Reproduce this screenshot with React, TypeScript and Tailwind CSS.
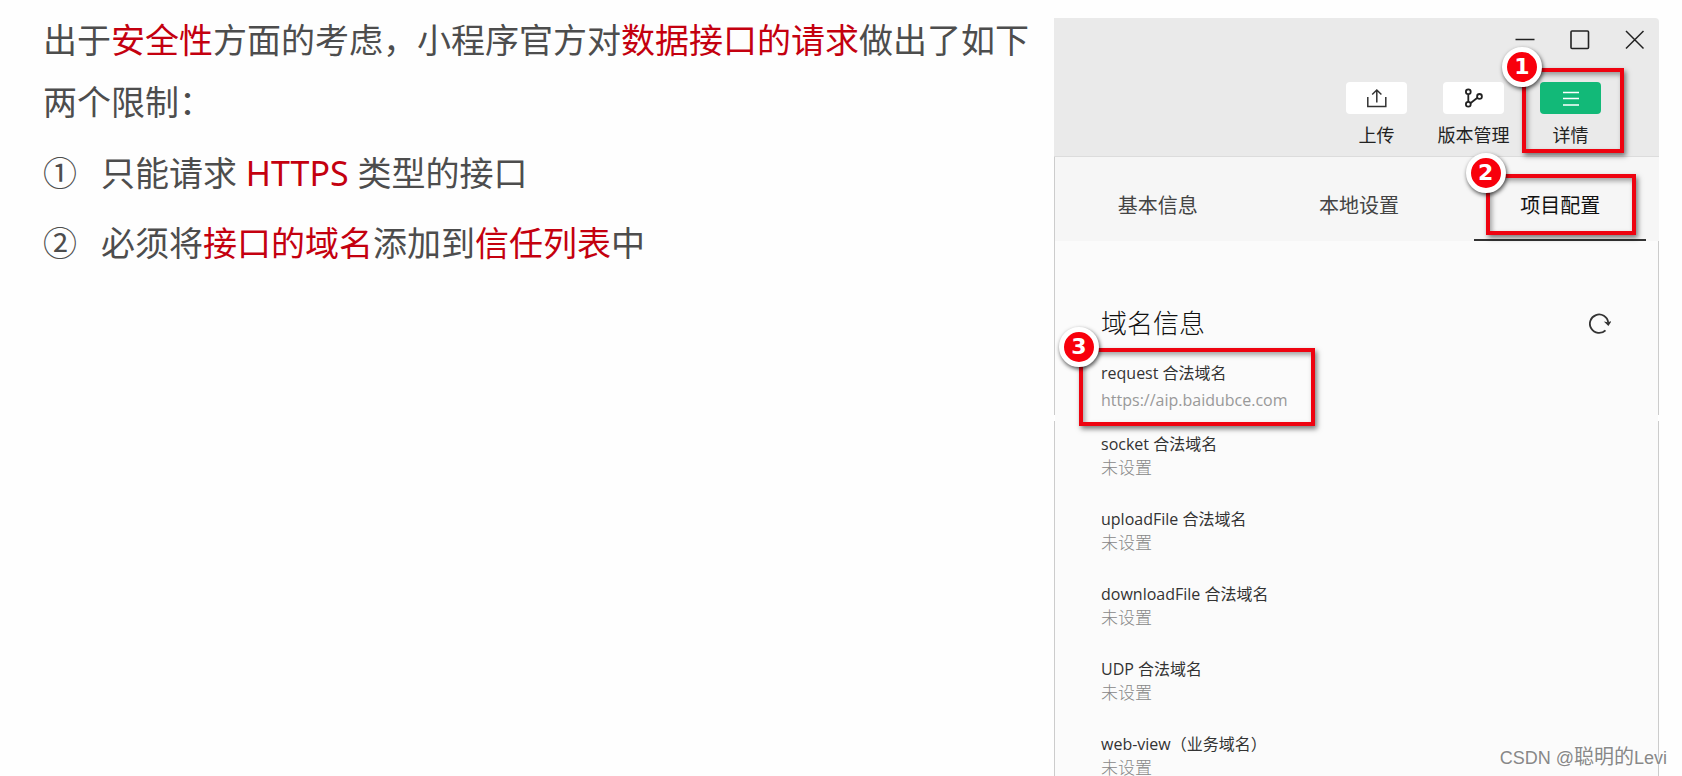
import type { ReactNode } from "react";

const SANS = "font-['Noto_Sans','Noto_Sans_CJK_SC',sans-serif]";
const UI = "font-['Open_Sans','Noto_Sans_CJK_SC',sans-serif]";

function Em({ children }: { children: ReactNode }) {
  return <em className="text-[#c4000f] not-italic">{children}</em>;
}

function Callout({ n, className }: { n: number; className: string }) {
  return (
    <div
      className={`pointer-events-none absolute z-10 border-4 border-[#ee0310] shadow-[2px_3px_5px_rgba(0,0,0,0.5),inset_2px_3px_5px_rgba(0,0,0,0.35)] ${className}`}
    >
      <span className="absolute -top-[25px] -left-6 flex size-10 items-center justify-center rounded-full border-[5px] border-white bg-[#f8000c] font-['DejaVu_Sans',sans-serif] text-[22px] leading-none font-bold text-white shadow-[1px_2px_4px_rgba(0,0,0,0.7)]">
        {n}
      </span>
    </div>
  );
}

function UploadIcon() {
  return (
    <svg viewBox="0 0 20 20" className="size-5" fill="none" stroke="#333" strokeWidth="1.5">
      <path d="M0.800 9V18.500H18.800V9M9.800 14.500V2M5.200 6.500L9.800 2L14.400 6.500" />
    </svg>
  );
}

function BranchIcon() {
  return (
    <svg viewBox="0 0 20 20" className="size-5" fill="none" stroke="#222" strokeWidth="1.800">
      <circle cx="4.300" cy="3.800" r="2.400" />
      <circle cx="4.300" cy="16.300" r="2.400" />
      <circle cx="15.500" cy="8.400" r="2.400" />
      <path d="M4.300 6.200V14M6.400 15.200L13.400 9.800" />
    </svg>
  );
}

function MenuIcon() {
  return (
    <svg viewBox="0 0 20 20" className="size-5" fill="none" stroke="#fff" strokeWidth="1.400">
      <path d="M2 4.500H18M2 10.500H18M2 17H18" />
    </svg>
  );
}

function Tool({ label, active, children }: { label: string; active?: boolean; children: ReactNode }) {
  return (
    <button type="button" className="flex w-[97px] flex-col items-center gap-2">
      <span
        className={`flex h-8 w-[61px] items-center justify-center rounded ${
          active ? "bg-[#12b978]" : "bg-white"
        }`}
      >
        {children}
      </span>
      <span className="text-[18px] leading-[26px] text-[#222]">{label}</span>
    </button>
  );
}

const tabs = ["基本信息", "本地设置", "项目配置"];

const domains = [
  "socket 合法域名",
  "uploadFile 合法域名",
  "downloadFile 合法域名",
  "UDP 合法域名",
  "web-view（业务域名）",
];

export default function App() {
  return (
    <div className={`relative flex h-screen items-stretch overflow-hidden bg-[#fefefe] ${SANS}`}>
      <main className="min-w-0 flex-1 pt-[9px] pr-4 pl-[43px] text-[34px] text-[#4d4d4d]">
        <p className="leading-[62px]">
          出于<Em>安全性</Em>方面的考虑，小程序官方对<Em>数据接口的请求</Em>做出了如下两个限制：
        </p>
        <ol className="mt-[5px] leading-[70px]">
          <li className="flex gap-6">
            <span>①</span>
            <span>
              只能请求 <Em>HTTPS</Em> 类型的接口
            </span>
          </li>
          <li className="flex gap-6">
            <span>②</span>
            <span>
              必须将<Em>接口的域名</Em>添加到<Em>信任列表</Em>中
            </span>
          </li>
        </ol>
      </main>

      <aside className={`mt-[18px] mr-[23px] flex w-[605px] shrink-0 flex-col ${UI}`}>
        <header className="rounded-tr border-b border-[#dcdcdc] bg-[#eaeaea] pb-2">
          <div className="flex justify-end gap-[35px] pt-3 pr-[14px]">
            <button type="button" aria-label="最小化">
              <svg viewBox="0 0 20 20" className="size-5" stroke="#222" strokeWidth="1.500">
                <path d="M0.500 9.500H19.500" />
              </svg>
            </button>
            <button type="button" aria-label="最大化">
              <svg viewBox="0 0 20 20" className="size-5" fill="none" stroke="#222" strokeWidth="1.600">
                <rect x="1" y="1" width="17.500" height="17.500" rx="1" />
              </svg>
            </button>
            <button type="button" aria-label="关闭">
              <svg viewBox="0 0 20 20" className="size-5" stroke="#222" strokeWidth="1.500">
                <path d="M1 1L18.500 18.500M18.500 1L1 18.500" />
              </svg>
            </button>
          </div>
          <div className="flex justify-end pt-8 pr-10">
            <Tool label="上传">
              <UploadIcon />
            </Tool>
            <Tool label="版本管理">
              <BranchIcon />
            </Tool>
            <div className="relative">
              <Tool label="详情" active>
                <MenuIcon />
              </Tool>
              <Callout n={1} className="-top-[14px] -right-[5px] -bottom-[5px] left-0" />
            </div>
          </div>
        </header>

        <nav className="flex border-l border-[#ccc] bg-[#f6f6f6]">
          {tabs.map((tab, i) => {
            const active = i === tabs.length - 1;
            return (
              <div key={tab} className="relative flex flex-1 justify-center pl-1">
                <button
                  type="button"
                  className={`w-[172px] border-b-2 pt-[35px] pb-[19px] text-[20px] leading-7 ${
                    active ? "border-[#333] text-[#111]" : "border-transparent text-[#444]"
                  }`}
                >
                  {tab}
                </button>
                {active && <Callout n={2} className="top-[17px] right-[23px] bottom-[6px] left-[28px]" />}
              </div>
            );
          })}
        </nav>

        <section className="border-x border-[#ccc] bg-[#fbfbfb] pt-16 pr-[47px] pb-[3px] pl-[46px]">
          <div className="flex items-center justify-between">
            <h2 className="text-[26px] leading-9 font-light text-[#111]">域名信息</h2>
            <button type="button" aria-label="刷新">
              <svg viewBox="0 0 22 22" className="size-[22px]" fill="none" stroke="#333" strokeWidth="1.800">
                <path d="M16.500 18.300A9.200 9.200 0 1 1 19.200 10.500" />
                <path d="M14.800 9.500L18.800 10.200L22.500 9.200L19.400 14Z" fill="#333" stroke="none" />
              </svg>
            </button>
          </div>
          <div className="relative mt-5 text-[16px] leading-6">
            <h3 className="text-[#333]">request 合法域名</h3>
            <p className="mt-[3px] text-[#999]">https://aip.baidubce.com</p>
            <Callout n={3} className="-top-[13px] -bottom-[14px] -left-[22px] w-[236px]" />
          </div>
        </section>

        <div className="h-[6px] shrink-0 border-x border-white bg-[#fbfbfb]" />

        <section className="flex-1 border-x border-[#ccc] bg-[#fbfbfb] pt-[11px] pl-[46px]">
          <ul className="flex flex-col gap-[27px] leading-6">
            {domains.map((name) => (
              <li key={name}>
                <h3 className="text-[16px] text-[#333]">{name}</h3>
                <p className="text-[17px] font-light text-[#888]">未设置</p>
              </li>
            ))}
          </ul>
        </section>
      </aside>

      <footer className="absolute right-[15px] bottom-[5px] z-20 font-['Liberation_Sans','Noto_Sans_CJK_SC',sans-serif] text-[18px] leading-[26px] text-[#888] [text-shadow:-1px_-1px_0_#fff]">
        CSDN @<span className="text-[20px]">聪明的</span>Levi
      </footer>
    </div>
  );
}
